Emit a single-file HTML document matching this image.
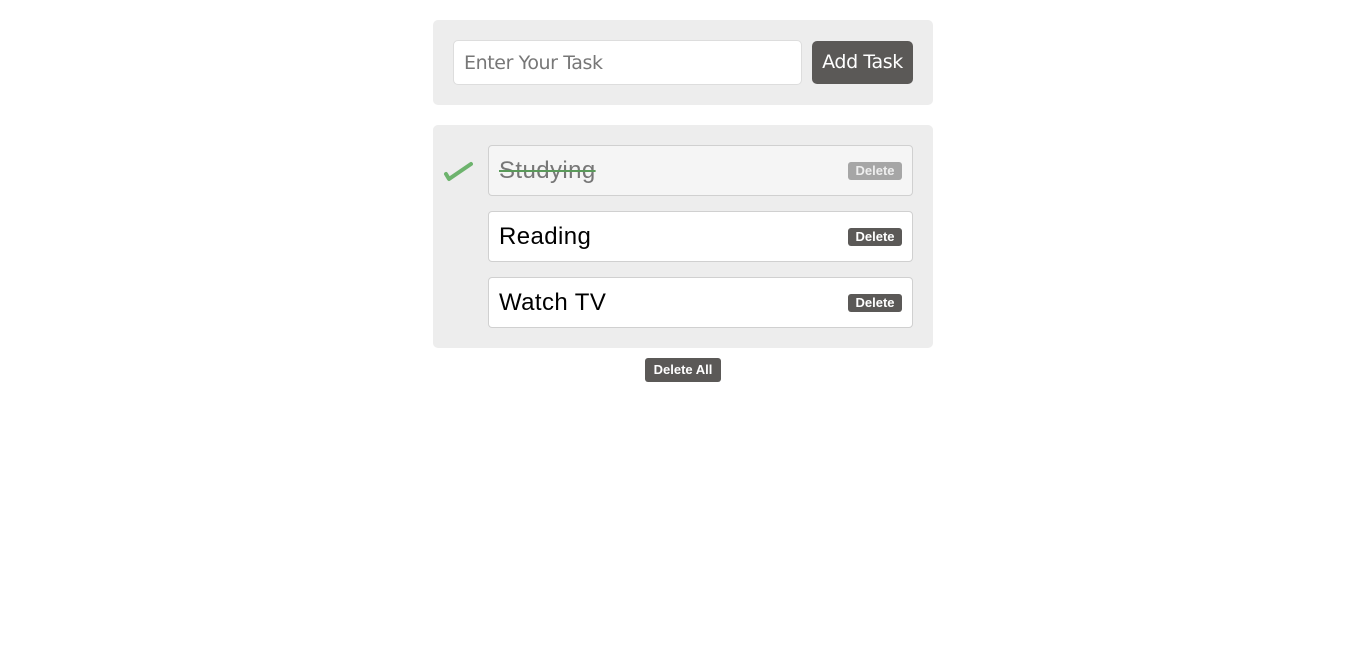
<!DOCTYPE html>
<html><head><style>
body{margin:0;width:1366px;height:656px;background:#fff;font-family:"Liberation Sans",sans-serif;position:relative}
.box{position:absolute;left:433px;width:500px;background:#ededed;border-radius:5px}
.inp{position:absolute;left:453px;top:40px;width:347px;height:43px;background:#fff;border:1px solid #ddd;border-radius:5px;box-sizing:content-box}
.inp span{position:absolute;left:10px;top:11px;font-size:19px;color:#777;font-family:"DejaVu Sans","Liberation Sans",sans-serif;letter-spacing:-0.4px}
.add{position:absolute;left:812px;top:41px;width:101px;height:43px;background:#5b5957;border-radius:5px;color:#fff;font-size:19px;line-height:43px;text-align:center;font-family:"DejaVu Sans","Liberation Sans",sans-serif;letter-spacing:-0.4px}
.item{position:absolute;left:488px;width:423px;height:49px;border:1px solid #d0d0d0;border-radius:4px;background:#fff}
.item .t{position:absolute;left:10px;top:11px;font-size:24px;color:#000;letter-spacing:0.4px}
.del{position:absolute;left:359px;top:16px;width:54px;height:18px;background:#5b5957;border-radius:3px;color:#fff;font-size:13px;font-weight:bold;line-height:18px;text-align:center}
.done{background:#f5f5f5}
.done .t{color:#777;text-decoration:line-through;text-decoration-color:#5a9a5a}
.done .del{background:#a6a6a6;color:#eee}
.da{position:absolute;left:645px;top:358px;width:76px;height:24px;background:#5b5957;border-radius:3px;color:#fff;font-size:13px;font-weight:bold;line-height:24px;text-align:center}
</style></head><body>
<div class="box" style="top:20px;height:85px"></div>
<div class="inp"><span>Enter Your Task</span></div>
<div class="add">Add Task</div>
<div class="box" style="top:125px;height:223px"></div>
<svg style="position:absolute;left:443px;top:158px" width="30" height="24"><path d="M3 16 L6 21 L28 6" fill="none" stroke="#6db36d" stroke-width="4" stroke-linecap="round" stroke-linejoin="round"/></svg>
<div class="item done" style="top:145px"><span class="t">Studying</span><div class="del">Delete</div></div>
<div class="item" style="top:211px"><span class="t">Reading</span><div class="del">Delete</div></div>
<div class="item" style="top:277px"><span class="t">Watch TV</span><div class="del">Delete</div></div>
<div class="da">Delete All</div>
</body></html>
